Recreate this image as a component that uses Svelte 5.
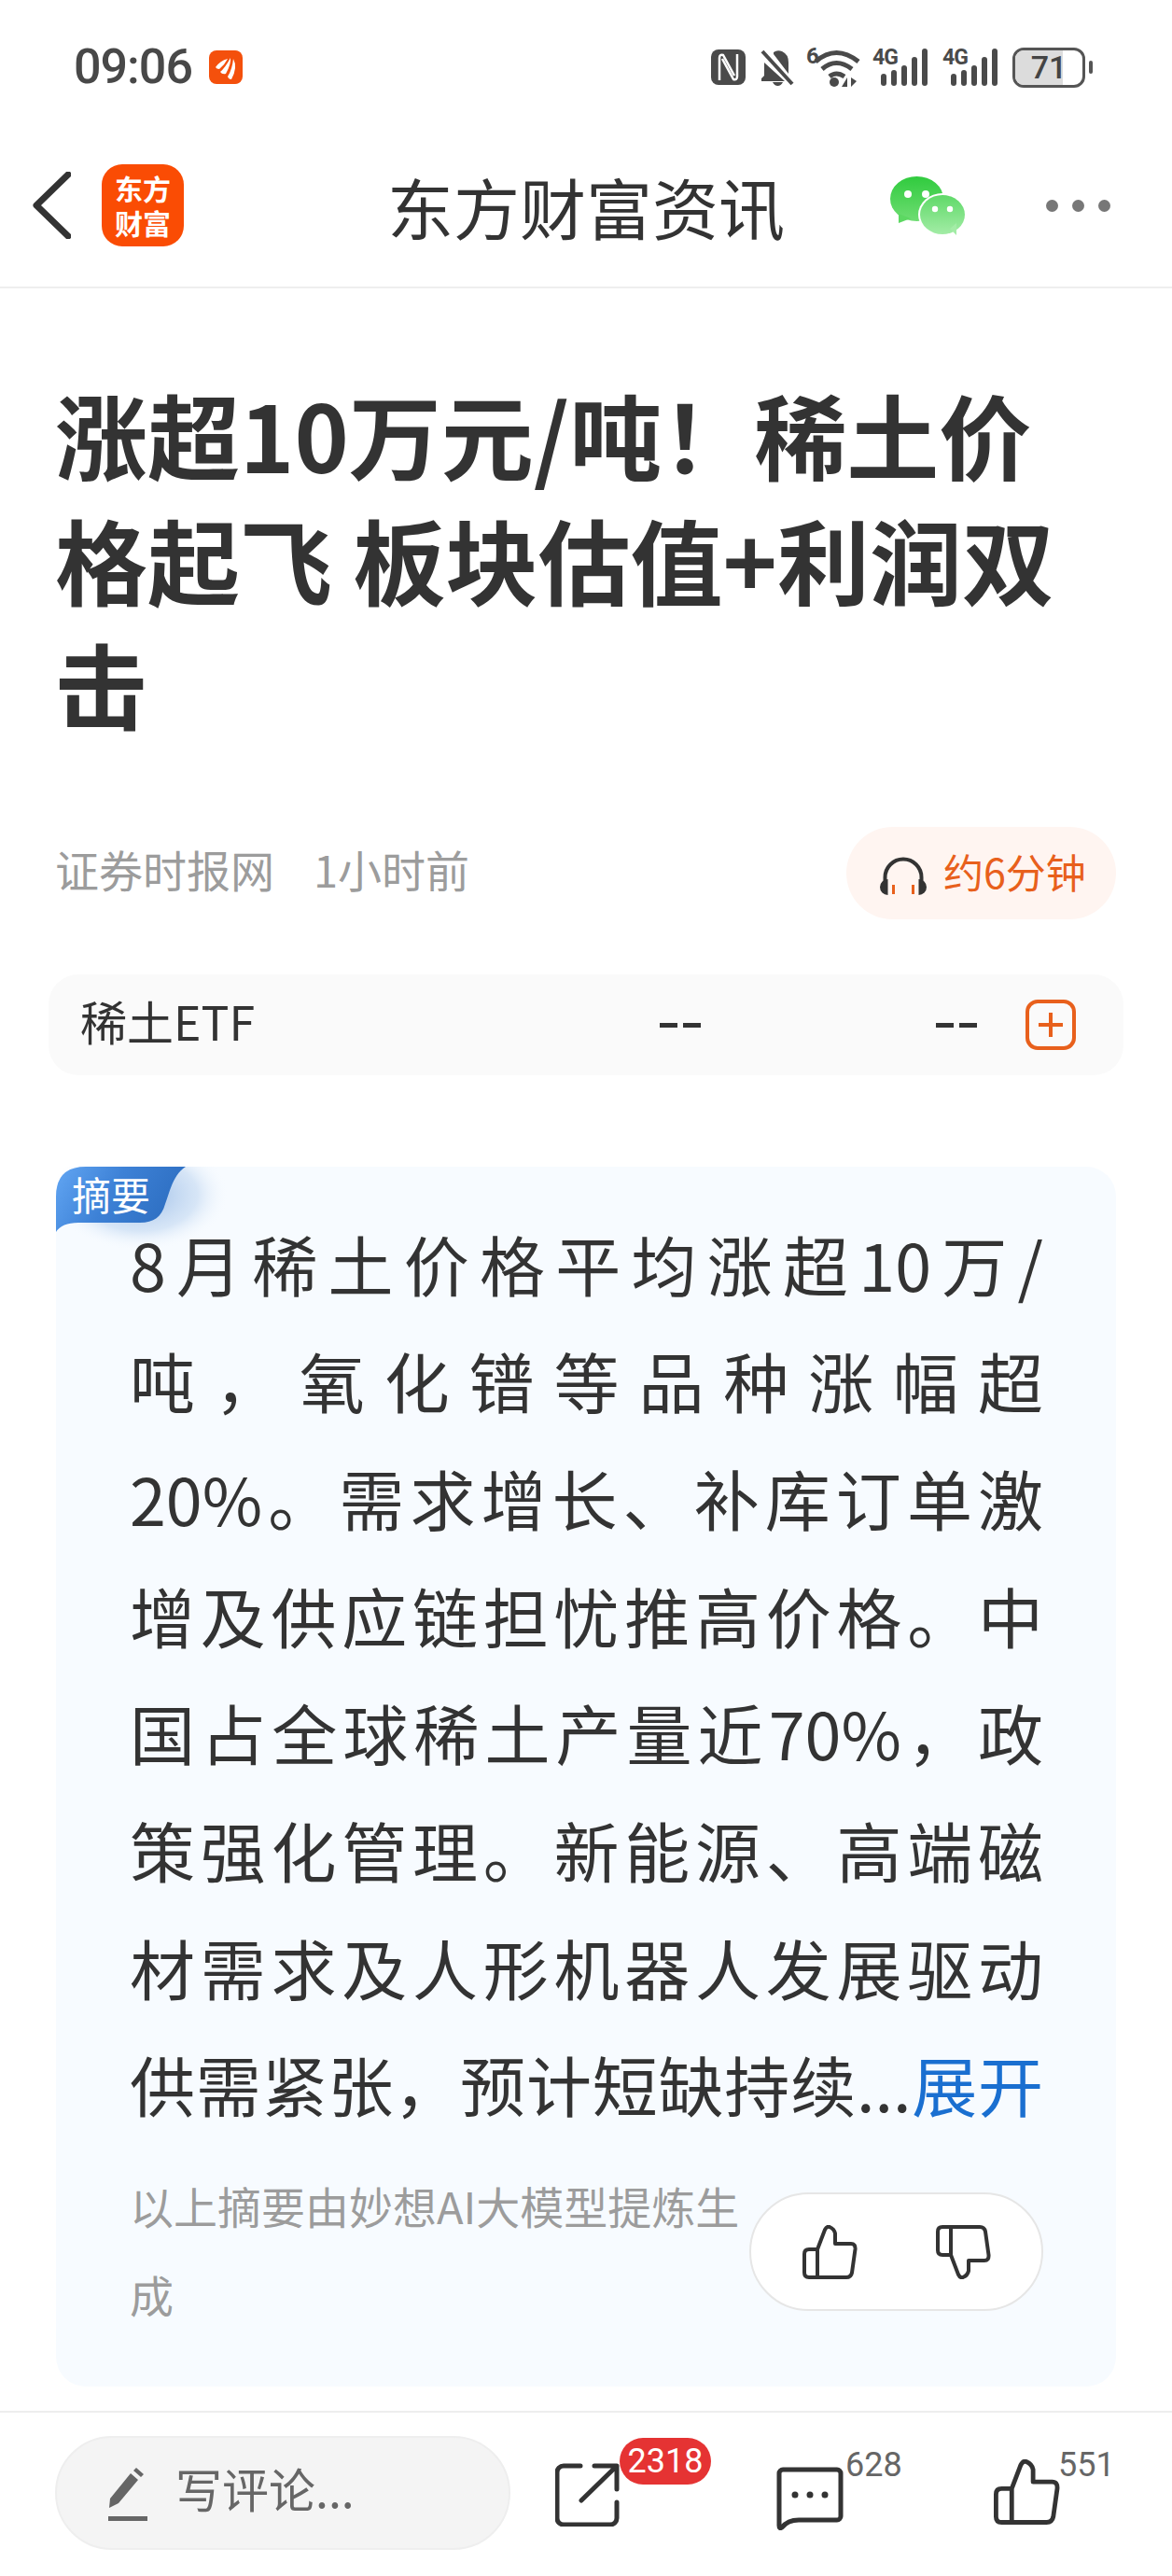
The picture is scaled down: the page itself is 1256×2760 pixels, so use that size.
<script>
	const lines = [
		'8月稀土价格平均涨超10万/',
		'吨\uFF0C氧化镨等品种涨幅超',
		'20%。需求增长、补库订单激',
		'增及供应链担忧推高价格。中',
		'国占全球稀土产量近70%\uFF0C政',
		'策强化管理。新能源、高端磁',
		'材需求及人形机器人发展驱动'
	];
	const signals = [0, 1];
</script>

{#snippet thumb()}
	<path d="M16 26 L24 5 Q26 1 29 2 Q34 4 35 9 V20 H52 Q57 20 56.5 26 L53 51 Q52 56 47 56 H7 Q2 56 2 51 V31 Q2 26 7 26 H16 V56" />
{/snippet}

<div class="page">
	<header class="status">
		<span class="time">09:06</span>
		<svg class="app-icon" viewBox="0 0 36 36">
			<rect width="36" height="36" rx="8" fill="#f4500c" />
			<path d="M7 18 Q12 11 20 9 Q17 15 11 20 Q8 20 7 18Z M12 23 Q17 19 23 8 Q24 14 18 25 Q14 26 12 23Z M20 28 Q25 20 26 9 Q31 18 24 31 Q21 31 20 28Z" fill="#fff" />
		</svg>
		<div class="status-icons">
			<svg class="nfc" viewBox="0 0 37 38">
				<rect width="37" height="38" rx="8" fill="#4a4a4a" />
				<path d="M9 33 V9 Q9 5 13 6 L25 28 M28 5 V29 Q28 33 24 32 L12 10" stroke="#fff" stroke-width="2.5" fill="none" />
			</svg>
			<svg class="bell" viewBox="0 0 36 39">
				<path d="M14 3 Q18 0 23 2 Q30 5 30 14 V26 L14 5Z M4 14 L26 34 H1 V31 L4 28Z M13 35 H24 Q22 39 18.5 39 Q15 39 13 35Z" fill="#4a4a4a" />
				<path d="M2 2 L34 37" stroke="#4a4a4a" stroke-width="4" fill="none" />
			</svg>
			<div class="wifi-wrap">
				<span class="wifi-six">6</span>
				<svg class="wifi" viewBox="0 0 50 40">
					<path d="M2 13 Q24 -6 48 13 M9 21 Q24 8 41 21 M17 29 Q24 23 33 29" stroke="#4a4a4a" stroke-width="5" fill="none" />
					<circle cx="22" cy="35" r="5" fill="#4a4a4a" />
					<path d="M36 30 V40 H30Z M40 30 L46 34 L40 40Z" fill="#4a4a4a" />
				</svg>
			</div>
			{#each signals as s (s)}
				<div class="signal">
					<span class="net">4G</span>
					<div class="bars">
						<i style="height: 13px"></i>
						<i style="height: 17px"></i>
						<i style="height: 22px"></i>
						<i style="height: 31px"></i>
						<i style="height: 40px"></i>
					</div>
				</div>
			{/each}
			<div class="battery">
				<div class="battery-fill"></div>
				<span>71</span>
			</div>
			<div class="battery-nub"></div>
		</div>
	</header>

	<nav class="nav">
		<svg class="back" viewBox="0 0 41 72">
			<path d="M38 3 L4 36 L38 69" stroke="#333" stroke-width="7" fill="none" stroke-linecap="round" stroke-linejoin="round" />
		</svg>
		<div class="logo"><span>东方</span><span>财富</span></div>
		<div class="nav-title">东方财富资讯</div>
		<svg class="wechat" viewBox="0 0 80 63">
			<defs>
				<linearGradient id="wa" x1="0" y1="0" x2="0" y2="1">
					<stop offset="0" stop-color="#30cb3e" />
					<stop offset="1" stop-color="#6fdd73" />
				</linearGradient>
				<linearGradient id="wb" x1="0" y1="0" x2="0" y2="1">
					<stop offset="0" stop-color="#5fd968" />
					<stop offset="1" stop-color="#a3eca6" />
				</linearGradient>
			</defs>
			<ellipse cx="28.5" cy="24" rx="28.5" ry="24" fill="url(#wa)" />
			<path d="M9 40 L9 50 L22 45Z" fill="#5cd862" />
			<ellipse cx="56" cy="41" rx="26" ry="23" fill="#fff" />
			<ellipse cx="56" cy="41" rx="24" ry="21" fill="url(#wb)" />
			<path d="M64 56 L71 63 L71 50Z" fill="#a3eca6" />
			<circle cx="19" cy="19" r="4" fill="#fff" />
			<circle cx="38" cy="19" r="4" fill="#fff" />
			<circle cx="48" cy="35" r="3.2" fill="#fff" />
			<circle cx="64" cy="35" r="3.2" fill="#fff" />
		</svg>
		<div class="more"><i></i><i></i><i></i></div>
	</nav>

	<h1 class="headline">涨超10万元/吨&#xFF01;稀土价<br />格起飞 板块估值+利润双<br />击</h1>

	<div class="meta">
		<div class="source"><span>证券时报网</span><span>1小时前</span></div>
		<div class="listen">
			<svg class="phones" viewBox="0 0 51 41">
				<path d="M6 28 V22 A19.5 19.5 0 0 1 45 22 V28" stroke="#333" stroke-width="4" fill="none" />
				<path d="M9 24 A8.5 8.5 0 0 0 9 41Z M42 24 A8.5 8.5 0 0 1 42 41Z" fill="#333" />
				<path d="M15 30 V40 M36 30 V40" stroke="#e8601c" stroke-width="3" />
			</svg>
			<span>约6分钟</span>
		</div>
	</div>

	<div class="etf">
		<span class="etf-name">稀土ETF</span>
		<span class="dash first"></span>
		<span class="dash second"></span>
		<svg class="add" viewBox="0 0 54 54">
			<rect x="2" y="2" width="50" height="50" rx="11" stroke="#e8601c" stroke-width="4" fill="none" />
			<path d="M14 27 H40 M27 14 V40" stroke="#e8601c" stroke-width="4" />
		</svg>
	</div>

	<section class="summary">
		<svg class="tag-bg" viewBox="0 0 260 130">
			<defs>
				<linearGradient id="tg" x1="0" y1="0" x2="1" y2="0.3">
					<stop offset="0" stop-color="#62a6f3" />
					<stop offset="0.5" stop-color="#3d81d6" />
					<stop offset="1" stop-color="#2e6fc2" />
				</linearGradient>
				<radialGradient id="glow">
					<stop offset="0" stop-color="#8fb4e4" stop-opacity="0.9" />
					<stop offset="0.65" stop-color="#bcd4f0" stop-opacity="0.55" />
					<stop offset="1" stop-color="#f7fbff" stop-opacity="0" />
				</radialGradient>
			</defs>
			<ellipse cx="90" cy="30" rx="95" ry="60" fill="url(#glow)" />
			<path d="M32 0 H139 C126 8 122 26 117 40 C113 54 105 60 90 60 H24 Q6 60 0 70 V32 Q0 0 32 0Z" fill="url(#tg)" />
		</svg>
		<span class="tag">摘要</span>

		<div class="body">
			{#each lines as line, i (i)}
				<div class="line">{line}</div>
			{/each}
			<div class="line">供需紧张&#xFF0C;预计短缺持续...<span class="expand">展开</span></div>
		</div>

		<div class="foot">
			<p class="note">以上摘要由妙想AI大模型提炼生成</p>
			<div class="feedback">
				<svg class="vote" viewBox="0 0 59 58">{@render thumb()}</svg>
				<svg class="vote" viewBox="0 0 59 58"><g transform="translate(0 58) scale(1 -1)">{@render thumb()}</g></svg>
			</div>
		</div>
	</section>

	<footer class="bottom">
		<div class="comment-box">
			<svg class="pen" viewBox="0 0 42 57">
				<path d="M1 43 L2 33 L24 6 L32 13 L11 38Z M27 3 L30 0 L38 7 L35 10Z" fill="#666" />
				<rect y="52" width="42" height="5" fill="#666" />
			</svg>
			<span class="placeholder">写评论...</span>
		</div>
		<div class="action share">
			<svg class="share-icon" viewBox="0 0 69 68">
				<path d="M27 3 H9 a7 7 0 0 0 -7 7 V59 a7 7 0 0 0 7 7 H59 a7 7 0 0 0 7 -7 V42 M28 40 L65 4 M42 3 H66 V28" />
			</svg>
			<span class="badge">2318</span>
		</div>
		<div class="action comment">
			<svg class="comment-icon" viewBox="0 0 72 68">
				<path d="M3 63 V7 a4 4 0 0 1 4 -4 H65 a4 4 0 0 1 4 4 V53 a4 4 0 0 1 -4 4 H24 Q12 57 6 65 Q3 67 3 63Z" />
				<circle cx="20" cy="30" r="3.5" />
				<circle cx="36" cy="30" r="3.5" />
				<circle cx="52" cy="30" r="3.5" />
			</svg>
			<span class="count">628</span>
		</div>
		<div class="action like">
			<svg class="like-icon" viewBox="0 0 59 58">{@render thumb()}</svg>
			<span class="count">551</span>
		</div>
	</footer>
</div>

<style>
	:global(body) {
		background: #fff;
	}
	.page {
		width: 1256px;
		height: 2760px;
		overflow: hidden;
		background: #fff;
		color: #333;
		font-family: 'Noto Sans CJK SC', 'Noto Sans', sans-serif;
	}

	.status {
		height: 130px;
		padding: 14px 85px 0 79px;
		box-sizing: border-box;
		display: flex;
		align-items: center;
	}
	.time {
		font-family: Roboto, sans-serif;
		font-size: 52px;
		font-weight: 500;
		letter-spacing: -1px;
		color: #484848;
		line-height: 1;
	}
	.app-icon {
		width: 36px;
		height: 36px;
		margin-left: 18px;
	}
	.status-icons {
		margin-left: auto;
		display: flex;
		align-items: center;
	}
	.nfc {
		width: 37px;
		height: 38px;
	}
	.bell {
		width: 36px;
		height: 39px;
		margin-left: 16px;
	}
	.wifi-wrap {
		position: relative;
		width: 58px;
		height: 42px;
		margin-left: 13px;
	}
	.wifi-six {
		position: absolute;
		left: 0;
		top: -3px;
		font: 700 24px/1 Roboto, sans-serif;
		color: #4a4a4a;
	}
	.wifi {
		position: absolute;
		right: 0;
		bottom: 0;
		width: 50px;
		height: 40px;
	}
	.signal {
		position: relative;
		width: 59px;
		height: 40px;
		margin-left: 16px;
	}
	.wifi-wrap + .signal {
		margin-left: 13px;
	}
	.net {
		position: absolute;
		left: 0;
		top: -2px;
		font: 700 23px/1 Roboto, sans-serif;
		letter-spacing: -1px;
		color: #4a4a4a;
	}
	.bars {
		position: absolute;
		right: 0;
		bottom: 0;
		display: flex;
		align-items: flex-end;
		gap: 5px;
	}
	.bars i {
		width: 6px;
		border-radius: 3px;
		background: #4a4a4a;
	}
	.battery {
		position: relative;
		width: 78px;
		height: 43px;
		margin-left: 16px;
		box-sizing: border-box;
		border: 3px solid #555;
		border-radius: 12px;
		overflow: hidden;
		display: flex;
		align-items: center;
		justify-content: center;
	}
	.battery-fill {
		position: absolute;
		left: 0;
		top: 0;
		bottom: 0;
		width: 71%;
		background: #dcdcdc;
	}
	.battery span {
		position: relative;
		font: 500 34px/1 Roboto, sans-serif;
		color: #444;
	}
	.battery-nub {
		width: 4px;
		height: 14px;
		margin-left: 4px;
		border-radius: 2px;
		background: #555;
	}

	.nav {
		height: 179px;
		box-sizing: border-box;
		padding: 3px 66px 0 35px;
		border-bottom: 2px solid #eeeeee;
		display: flex;
		align-items: center;
	}
	.back {
		width: 41px;
		height: 72px;
	}
	.logo {
		width: 88px;
		height: 88px;
		margin-left: 33px;
		border-radius: 22px;
		background: #fa4c04;
		color: #fff;
		display: flex;
		flex-direction: column;
		align-items: center;
		justify-content: center;
		font-size: 30px;
		font-weight: 700;
		line-height: 37px;
	}
	.nav-title {
		margin-left: 218px;
		font-size: 71px;
		line-height: 1;
		white-space: nowrap;
	}
	.wechat {
		width: 80px;
		height: 63px;
		margin-left: 113px;
	}
	.more {
		margin-left: auto;
		display: flex;
		gap: 15px;
	}
	.more i {
		width: 13px;
		height: 13px;
		border-radius: 50%;
		background: #777;
	}

	.headline {
		margin: 89px 0 0;
		padding-left: 59px;
		font-size: 99px;
		font-weight: 700;
		line-height: 133.5px;
		white-space: nowrap;
	}

	.meta {
		margin: 87px 60px 0;
		height: 99px;
		display: flex;
		align-items: center;
		justify-content: space-between;
	}
	.source {
		margin-left: -1px;
		margin-bottom: 10px;
		display: flex;
		gap: 42px;
		font-size: 47px;
		color: #9c9c9c;
	}
	.listen {
		width: 289px;
		height: 99px;
		box-sizing: border-box;
		padding-left: 35px;
		border-radius: 50px;
		background: #fff5f1;
		display: flex;
		align-items: center;
		gap: 17px;
		color: #e8601c;
		font-size: 43px;
	}
	.listen span {
		margin-bottom: 5px;
	}
	.phones {
		width: 52px;
		height: 41px;
		margin-top: 6px;
	}

	.etf {
		position: relative;
		margin: 59px 52px 0;
		height: 108px;
		padding-left: 34px;
		border-radius: 32px;
		background: #fafafa;
		display: flex;
		align-items: center;
		font-size: 50px;
	}
	.etf-name {
		margin-bottom: 9px;
	}
	.dash {
		position: absolute;
		top: 52px;
		width: 44px;
		height: 5px;
		background: repeating-linear-gradient(90deg, #333 0 19px, transparent 19px 25px);
	}
	.dash.first {
		left: 655px;
	}
	.dash.second {
		left: 951px;
	}
	.add {
		position: absolute;
		left: 1047px;
		top: 27px;
		width: 54px;
		height: 54px;
	}

	.summary {
		position: relative;
		margin: 98px 60px 0;
		height: 1307px;
		box-sizing: border-box;
		padding: 41px 78px 0 79px;
		border-radius: 32px;
		background: #f7fbff;
	}
	.tag-bg {
		position: absolute;
		left: 0;
		top: 0;
		width: 260px;
		height: 130px;
	}
	.tag {
		position: absolute;
		left: 17px;
		top: 4px;
		height: 50px;
		color: #fff;
		font-size: 42px;
		line-height: 50px;
	}
	.body {
		position: relative;
		font-size: 70px;
		line-height: 125.7px;
	}
	.line {
		text-align: justify;
		text-align-last: justify;
		white-space: nowrap;
	}
	.expand {
		color: #1a6fd0;
	}
	.foot {
		display: flex;
		margin-top: 19px;
	}
	.note {
		flex: 1;
		margin: 0;
		font-size: 47px;
		line-height: 95px;
		color: #9c9c9c;
	}
	.feedback {
		flex: none;
		width: 315px;
		height: 127px;
		margin-top: 34px;
		box-sizing: border-box;
		border: 2px solid #e6e6e6;
		border-radius: 64px;
		background: #fff;
		display: flex;
		align-items: center;
		justify-content: center;
		gap: 84px;
	}
	.vote {
		width: 59px;
		height: 58px;
	}
	.vote :global(path),
	.like-icon :global(path) {
		fill: none;
		stroke: #333;
		stroke-width: 4;
		stroke-linejoin: round;
		stroke-linecap: round;
	}

	.bottom {
		position: relative;
		margin-top: 26px;
		height: 177px;
		box-sizing: border-box;
		border-top: 2px solid #eeeeee;
		padding: 25px 0 0 59px;
	}
	.comment-box {
		width: 488px;
		height: 122px;
		box-sizing: border-box;
		padding-left: 55px;
		border: 2px solid #eeeeee;
		border-radius: 61px;
		background: #f4f4f4;
		display: flex;
		align-items: center;
		gap: 30px;
		color: #666;
		font-size: 50px;
	}
	.placeholder {
		margin-bottom: 12px;
	}
	.pen {
		width: 42px;
		height: 57px;
		margin-top: 4px;
	}
	.action {
		position: absolute;
		top: 0;
	}
	.share {
		left: 595px;
	}
	.comment {
		left: 832px;
	}
	.like {
		left: 1065px;
	}
	.share-icon,
	.comment-icon {
		position: absolute;
		fill: none;
		stroke: #333;
		stroke-width: 5;
		stroke-linecap: round;
		stroke-linejoin: round;
	}
	.share-icon {
		top: 54px;
		width: 69px;
		height: 68px;
	}
	.comment-icon {
		top: 58px;
		width: 72px;
		height: 68px;
	}
	.comment-icon circle {
		fill: #333;
		stroke: none;
	}
	.like-icon {
		position: absolute;
		top: 50px;
		width: 71px;
		height: 70px;
	}
	.badge {
		position: absolute;
		left: 69px;
		top: 27px;
		width: 98px;
		height: 50px;
		border-radius: 25px;
		background: #e53333;
		color: #fff;
		font: 36px/50px Roboto, sans-serif;
		text-align: center;
	}
	.count {
		position: absolute;
		top: 38px;
		font: 36px/1 Roboto, sans-serif;
		color: #666;
	}
	.comment .count {
		left: 74px;
	}
	.like .count {
		left: 69px;
	}
</style>
